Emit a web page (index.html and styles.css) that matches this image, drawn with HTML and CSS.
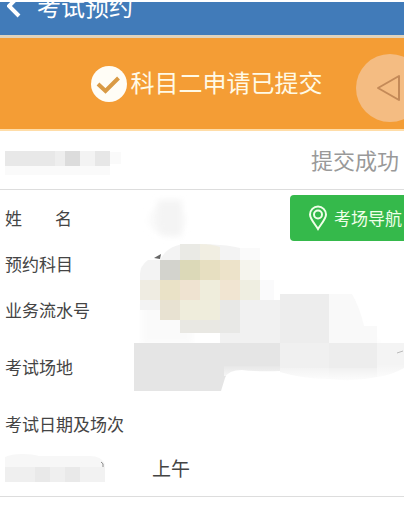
FILE: index.html
```html
<!DOCTYPE html>
<html lang="zh-CN">
<head>
<meta charset="utf-8">
<meta name="viewport" content="width=device-width, initial-scale=1">
<title>考试预约</title>
<link rel="stylesheet" href="styles.css">
</head>
<body>
<div class="page">
  <header class="topbar">
    <button class="back" type="button" aria-label="返回">
      <svg width="14" height="24" viewBox="0 0 14 24" fill="none" stroke="#fff" stroke-width="4"><path d="M12 2 2 12 12 22"/></svg>
    </button>
    <h1 class="title">考试预约</h1>
  </header>

  <section class="banner">
    <svg width="36" height="36" viewBox="0 0 36 36" aria-hidden="true"><circle cx="18" cy="18" r="18" fill="#fffdf6"/><path d="M7 18 14.500 25 27.500 12" fill="none" stroke="#d99a45" stroke-width="4"/></svg>
    <p class="banner-text">科目二申请已提交</p>
    <button class="float" type="button" aria-label="悬浮返回">
      <svg width="68" height="68" viewBox="0 0 68 68" fill="none" stroke="#c48a58" stroke-width="2" stroke-linejoin="round"><path d="M43 22V46L22 34Z"/></svg>
    </button>
  </section>

  <section class="status">
    <svg width="116" height="24" viewBox="0 0 116 24" aria-hidden="true">
      <path fill="#e8e8e8" d="M0 0h50v15H0z"/><path fill="#eee" d="M50 0h10v15H50z"/><path fill="#dcdcdc" d="M60 0h15v15H60z"/><path fill="#f3f3f3" d="M75 0h15v15H75z"/><path fill="#e7e7e7" d="M90 0h15v15H90z"/><path fill="#fafafa" d="M0 15h105v9H0zM105 1h11v12h-11z"/>
    </svg>
    <p class="status-text">提交成功</p>
  </section>

  <main class="details">
    <div class="row"><span class="label spread"><span>姓</span><span>名</span></span>
      <button class="nav" type="button">
        <svg width="20" height="26" viewBox="0 0 20 26" fill="none" stroke="#f0ffe9" stroke-width="2"><path d="M10 24C7 19 2 14 2 9.500a8 8 0 0 1 16 0c0 4.500-5 9.500-8 14.500Z"/><circle cx="10" cy="9.500" r="4"/></svg>
        <span>考场导航</span>
      </button>
    </div>
    <div class="row"><span class="label">预约科目</span></div>
    <div class="row"><span class="label">业务流水号</span></div>
    <div class="row tall"><span class="label">考试场地</span></div>
    <div class="row"><span class="label">考试日期及场次</span></div>
    <div class="row session">
      <svg width="104" height="28" viewBox="0 0 104 28" aria-hidden="true">
        <path fill="#f7f7f7" d="M0 3Q6 0 18 0 28 0 34 2H85Q96 2 100 10V28H0z"/><path fill="#efefef" d="M0 13h30v15H0z"/><path fill="#e9e9e9" d="M30 13h15v15H30zM60 13h15v15H60z"/><path fill="#efefef" d="M45 13h15v15H45z"/><path fill="#f2f2f2" d="M75 13h25v15H75z"/><path d="M96 8q3 1 2 5" fill="none" stroke="#888"/>
      </svg>
      <span class="time">上午</span>
    </div>
    <svg class="mask" width="270" height="200" viewBox="0 0 270 200" aria-hidden="true">
      <defs>
        <filter id="soft" x="-20%" y="-20%" width="140%" height="140%"><feGaussianBlur stdDeviation="3"/></filter>
        <linearGradient id="fade" x1="0" y1="0" x2="0" y2="1"><stop offset="0" stop-color="#fff" stop-opacity="0"/><stop offset="1" stop-color="#fff"/></linearGradient>
      </defs>
      <ellipse cx="33" cy="14" rx="19" ry="14" fill="#fafafa" filter="url(#soft)"/>
      <path fill="#f4f4f4" d="M24-6h24v36H30q-8-4-8-16z" filter="url(#soft)"/>
      <path fill="#fafafa" d="M8 98h50v40H8zM194 100h24l14 34h12v16h-50z" filter="url(#soft)"/>
      <path fill="#f3f3f3" d="M6 88V68Q6 60 14 54H26Q34 38 54 38H72Q96 39 106 42V54H26V104H6z"/>
      <path fill="#fafafa" d="M106 42h20v12h-20z"/>
      <path fill="#f1f1f1" d="M86 94h74v49H86z"/><path fill="#fff" d="M126 90h34v4h-34z"/><path fill="#ededed" d="M146 88h49v49h-49z"/><path fill="#f9f9f9" d="M195 88h23q8 14 12 32h13v17h-48z"/>
      <path fill="#eaeae5" d="M46 38h20v16H46z"/><path fill="#f1eee2" d="M66 38q12 0 20 3v13H66z"/>
      <path fill="#d3d3cd" d="M26 54h20v20H26z"/><path fill="#dcd9b8" d="M46 54h20v20H46z"/><path fill="#e7dfc1" d="M66 54h20v20H66z"/><path fill="#ede3ca" d="M86 54h20v20H86z"/><path fill="#f5f4ed" d="M106 54h20v20h-20z"/>
      <path fill="#efece2" d="M6 74h20v20H6z"/><path fill="#eae2c7" d="M26 74h20v20H26z"/><path fill="#efe3d1" d="M46 74h20v20H46z"/><path fill="#efeddc" d="M66 74h20v20H66z"/><path fill="#f1e5d2" d="M86 74h20v20H86z"/><path fill="#efeee1" d="M106 74h20v20h-20z"/><path fill="#fafafb" d="M126 74h14v20h-14z"/>
      <path fill="#e8e2d2" d="M26 94h20v20H26z"/><path fill="#efeddc" d="M46 94h40v20H46z"/><path fill="#e8e8e6" d="M86 94h20v33H86z"/><path fill="#e9e8e3" d="M46 114h40v13H46z"/>
      <path fill="#e5e5e5" d="M0 137h146v28q-20 1-38-1-14 0-17 8l-4 13H0z"/>
      <path fill="#f0f0f0" d="M146 137h49v36q-26 0-49-7z"/><path fill="#ededed" d="M195 137h48v34q-24 5-48 2z"/><path fill="#f4f4f4" d="M243 137h27v25q-12 7-27 9z"/>
      <path fill="url(#fade)" d="M90 160h56v10H90zM146 162h97v15h-97zM243 158h27v14h-27z"/>
      <path d="m20 52 7-4-1 5z" fill="#666"/><path d="m263 147 6-2" stroke="#bbb"/>
    </svg>
  </main>
</div>
</body>
</html>
```
FILE: styles.css
```css
* { box-sizing: border-box; }

body {
  margin: 0;
  background: #fff;
  color: #444;
  font: 17px/24px "Noto Sans CJK SC", sans-serif;
}

h1, p { margin: 0; font-weight: 400; }

button {
  margin: 0;
  padding: 0;
  border: 0;
  background: none;
  color: inherit;
  font: inherit;
}

svg { display: block; flex: none; }

.page {
  padding: 2px 1px 0 0;
  overflow: hidden;
}

.topbar {
  display: flex;
  align-items: flex-start;
  gap: 16px;
  height: 36px;
  padding-left: 7px;
  overflow: hidden;
  background: #417bb9;
  border-bottom: 3px solid #dfd3bd;
  color: #fff;
}

.topbar > * { margin-top: -8px; }

.title {
  font-size: 24px;
  line-height: 24px;
}

.banner {
  position: relative;
  display: flex;
  align-items: center;
  justify-content: center;
  gap: 4px;
  height: 93px;
  padding-left: 9px;
  overflow: hidden;
  background: #f49d35;
  border-bottom: 2px solid #ffdda8;
  color: #fffae6;
}

.banner-text {
  padding-bottom: 4px;
  font-size: 24px;
  line-height: 36px;
}

.float {
  position: absolute;
  top: 16px;
  right: -20px;
  border-radius: 50%;
  background: #f4bc82;
}

.status {
  display: flex;
  align-items: flex-start;
  justify-content: space-between;
  height: 59px;
  padding: 20px 5px 0;
  border-bottom: 1px solid #ddd;
}

.status-text {
  margin-top: -4px;
  color: #999;
  font-size: 22px;
}

.details {
  position: relative;
  padding: 5px 0 7px;
  border-bottom: 1px solid #ddd;
}

.row {
  display: flex;
  align-items: center;
  justify-content: space-between;
  height: 46px;
  padding-left: 5px;
}

.tall { height: 68px; }

.spread {
  display: flex;
  gap: 33px;
}

.nav {
  display: flex;
  align-items: center;
  gap: 6px;
  height: 46px;
  padding: 0 2px 0 18px;
  border-radius: 4px 0 0 4px;
  background: #35b94b;
  color: #f0ffe9;
}

.session {
  justify-content: flex-start;
  gap: 43px;
  height: 42px;
}

.time { font-size: 19px; }

.mask {
  position: absolute;
  top: 16px;
  left: 134px;
  overflow: visible;
  pointer-events: none;
}
```
